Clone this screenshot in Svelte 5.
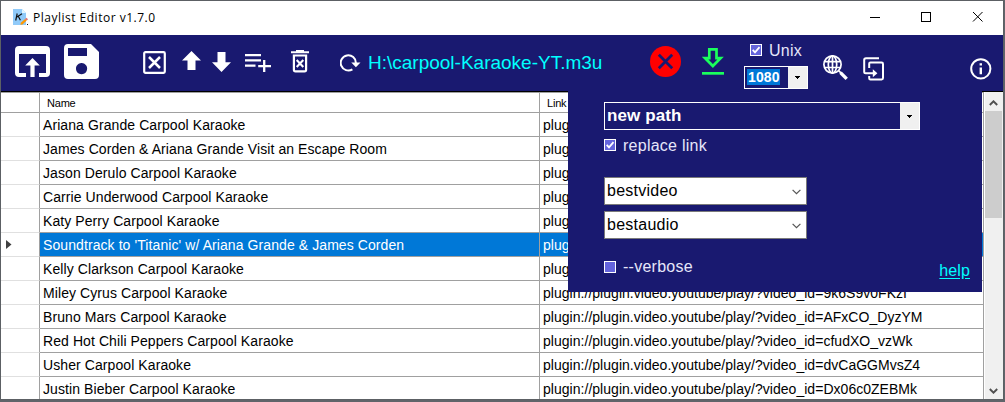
<script>
  const rows = [
    ['Ariana Grande Carpool Karaoke', 'plugin://'],
    ['James Corden & Ariana Grande Visit an Escape Room', 'plugin://'],
    ['Jason Derulo Carpool Karaoke', 'plugin://'],
    ['Carrie Underwood Carpool Karaoke', 'plugin://'],
    ['Katy Perry Carpool Karaoke', 'plugin://'],
    ["Soundtrack to 'Titanic' w/ Ariana Grande & James Corden", 'plugin://'],
    ['Kelly Clarkson Carpool Karaoke', 'plugin://'],
    ['Miley Cyrus Carpool Karaoke', 'plugin://plugin.video.youtube/play/?video_id=9k6S9v0FKzI'],
    ['Bruno Mars Carpool Karaoke', 'plugin://plugin.video.youtube/play/?video_id=AFxCO_DyzYM'],
    ['Red Hot Chili Peppers Carpool Karaoke', 'plugin://plugin.video.youtube/play/?video_id=cfudXO_vzWk'],
    ['Usher Carpool Karaoke', 'plugin://plugin.video.youtube/play/?video_id=dvCaGGMvsZ4'],
    ['Justin Bieber Carpool Karaoke', 'plugin://plugin.video.youtube/play/?video_id=Dx06c0ZEBMk']
  ];
  const selected = 5;
</script>

{#snippet check(on)}
  <svg class="check" width="12" height="12" viewBox="0 0 12 12">
    <rect x=".5" y=".5" width="11" height="11" fill="#6464dc" stroke="#fff" />
    {#if on}<path d="M2.7 5.8 5 8.3 9.5 3.2" fill="none" stroke="#fff" stroke-width="1.8" />{/if}
  </svg>
{/snippet}

{#snippet triangle()}
  <span class="drop"><svg width="5" height="3" viewBox="0 0 5 3" shape-rendering="crispEdges"><path d="M0 0h5v1H4v1H3v1H2V2H1V1H0z" fill="#000" /></svg></span>
{/snippet}

{#snippet chevron()}
  <svg width="9" height="6" viewBox="0 0 9 6"><path d="M.6 .8 4.5 4.7 8.4 .8" fill="none" stroke="#555" stroke-width="1.2" /></svg>
{/snippet}

<div class="window">
  <header class="titlebar">
    <svg class="app" width="16" height="17" viewBox="0 0 16 17">
      <path d="M0 0h9l4 4v12H0z" fill="#90caf9" /><path d="M9 0v4h4z" fill="#e1f5fe" />
      <path d="M4.2 4.5 2.7 11.5M9 4.8 3.5 8.2M5.4 7.5 7.4 11.3" stroke="#111" stroke-width="1.2" fill="none" />
      <path d="m7.3 15.8.5-2 4.3-3.7 1.6 1.5-4.2 4z" fill="#ff9800" /><path d="m12 10.1 1.4-1.3 1.7 1.5-1.4 1.3z" fill="#e57373" />
      <path d="M14 15h1v1h-1z" fill="#111" />
    </svg>
    <span class="title">Playlist Editor v1.7.0</span>
    <svg class="controls" width="115" height="12" viewBox="0 0 115 12" fill="none" stroke="#000">
      <path d="M0 6.5h10M51.5 1.5h9v9h-9z" shape-rendering="crispEdges" />
      <path d="m103 1 9.5 9.5m0-9.5L103 10.5" />
    </svg>
  </header>

  <div class="toolbar">
    <svg class="open" width="35" height="32" viewBox="0 0 35 32" fill="#fff">
      <path d="M4 0h27q4 0 4 4v23q0 4-4 4h-7v-4h7V8H4v19h7v4H4q-4 0-4-4V4q0-4 4-4z" />
      <path d="m17.5 12 7.3 7.5h-5.2V31h-4.2V19.5h-5.2z" />
    </svg>
    <svg class="save" width="35" height="35" viewBox="0 0 35 35">
      <path d="M4 0h23l8 8v23q0 4-4 4H4q-4 0-4-4V4q0-4 4-4zM4 4v8h19V4zM17.5 19a5.6 5.6 0 1 0 .1 0z" fill="#fff" fill-rule="evenodd" />
    </svg>
    <svg class="xbox" width="23" height="23" viewBox="0 0 23 23" fill="none" stroke="#fff">
      <rect x="1.2" y="1.2" width="20.6" height="20.6" rx="1.2" stroke-width="2.2" /><path d="m6 6 11 11m0-11L6 17" stroke-width="2.5" />
    </svg>
    <svg class="up" width="19" height="20" viewBox="0 0 19 20"><path d="M9.5 0 19 9.5h-5.5V19h-8V9.5H0z" fill="#fff" /></svg>
    <svg class="down" width="19" height="20" viewBox="0 0 19 20"><path d="M9.5 20 0 10.3h5.5V0h8v10.3H19z" fill="#fff" /></svg>
    <svg class="add" width="26" height="18" viewBox="0 0 26 18"><path d="M0 1.2h16M0 6.4h16M0 11.6h10.5M19.2 6v12M13.2 12.2H26" fill="none" stroke="#fff" stroke-width="2.3" /></svg>
    <svg class="trash" width="18" height="23" viewBox="0 0 18 23" fill="none" stroke="#fff">
      <path d="M0 2.3h18M5 1h8" stroke-width="2" /><path d="M2.9 5.5v14.3q0 1.6 1.6 1.6h9q1.6 0 1.6-1.6V5.5z" stroke-width="2.2" /><path d="m5.7 10 6.6 7m0-7-6.6 7" stroke-width="2.1" />
    </svg>
    <svg class="reload" width="21" height="18" viewBox="0 0 21 18"><path d="M12.4 15.3A7.6 7.6 0 1 1 15.9 9" fill="none" stroke="#fff" stroke-width="2" /><path d="M11.3 8.4H20.5L15.9 13.3z" fill="#fff" /></svg>
    <span class="file">H:\carpool-Karaoke-YT.m3u</span>
    <svg class="stop" width="31" height="31" viewBox="0 0 31 31"><circle cx="15.5" cy="15.5" r="15.5" fill="#f00" /><path d="m8.8 8.8 13.4 13.4m0-13.4L8.8 22.2" stroke="#191970" stroke-width="2.8" /></svg>
    <svg class="get" width="22" height="27" viewBox="0 0 22 27"><path d="M7.3 1.4h7.2v8.8h4.1L10.9 18 3.2 10.2h4.1z" fill="none" stroke="#1aff5c" stroke-width="2.7" /><path d="M0 24h22v2.7H0z" fill="#1aff5c" /></svg>
    <div class="quality">
      <label>{@render check(true)}<span>Unix</span></label>
      <div class="combo small"><b><mark>1080</mark></b>{@render triangle()}</div>
    </div>
    <svg class="globe" width="26" height="26" viewBox="0 0 26 26" fill="none" stroke="#fff" stroke-width="1.7">
      <circle cx="9.5" cy="9.5" r="8.6" /><ellipse cx="9.5" cy="9.5" rx="4.2" ry="8.6" /><path d="M1.5 6.6h16M1.5 12.5h16M9.5 1v17" /><path d="m15.8 15.8 2.5 2.4" /><path d="m17.5 17.6 6.2 6.3" stroke-width="3.4" />
    </svg>
    <svg class="dup" width="22" height="24" viewBox="0 0 22 24" fill="none" stroke="#fff" stroke-width="2">
      <path d="M16 1.2H3q-1.8 0-1.8 1.8v11.8q0 1.5 1.5 1.5H12" /><path d="M6.2 11V6.8q0-1.2 1.2-1.2h11.2q1.4 0 1.4 1.4v14q0 1.4-1.4 1.4H7.4q-1.2 0-1.2-1.2V19" /><path d="m9.8 12.2 4.6 4.1-4.6 4z" fill="#fff" stroke="none" />
    </svg>
    <svg class="info" width="22" height="22" viewBox="0 0 22 22"><circle cx="10.8" cy="10.8" r="9.6" fill="none" stroke="#fff" stroke-width="2" /><path d="M9.6 5.2H12v2.4H9.6zM9.6 9.4H12v6.8H9.6z" fill="#fff" /></svg>
  </div>

  <main>
    <div class="grid">
      <div class="row head"><i></i><span>Name</span><span>Link</span></div>
      {#each rows as [name, link], n}
        <div class="row" class:selected={n === selected}>
          <i>{#if n === selected}<svg width="6" height="9" viewBox="0 0 6 9"><path d="M0 0 5.5 4.5 0 9z" fill="#404040" /></svg>{/if}</i>
          <span>{name}</span><span class="link">{link}</span>
        </div>
      {/each}
    </div>
    <div class="scroll">
      <svg width="9" height="6" viewBox="0 0 9 6"><path d="M.8 5 4.5 1.3 8.2 5" fill="none" stroke="#505050" stroke-width="1.9" /></svg>
      <div class="thumb"></div>
      <svg class="end" width="9" height="6" viewBox="0 0 9 6"><path d="M.8 1 4.5 4.7 8.2 1" fill="none" stroke="#505050" stroke-width="1.9" /></svg>
    </div>
  </main>

  <aside class="panel">
    <div class="combo path"><b>new path</b>{@render triangle()}</div>
    <label class="replace">{@render check(true)}<span>replace link</span></label>
    <div class="select">bestvideo{@render chevron()}</div>
    <div class="select">bestaudio{@render chevron()}</div>
    <div class="foot">
      <label>{@render check(false)}<span class="verbose">--verbose</span></label>
      <a href="#help">help</a>
    </div>
  </aside>
</div>

<style>
  :global(body) { margin: 0; background: #60646a; overflow: hidden; }
  * { box-sizing: border-box; }
  svg { display: block; flex: none; }
  .window { position: relative; width: 1004px; height: 400px; border: 1px solid #5c6064; background: #fff; display: flex; flex-direction: column; overflow: hidden; font: 14px/23px "Liberation Sans", Arial, sans-serif; color: #000; white-space: nowrap; }
  .titlebar { height: 34px; flex: none; display: flex; align-items: flex-start; }
  .app { margin: 8px 0 0 12px; }
  .title { margin: 8px 0 0 4px; font: 12px/18px "Open Sans", "Noto Sans", sans-serif; letter-spacing: .5px; }
  .controls { margin: 10px 18.5px 0 auto; }
  .toolbar { height: 56px; flex: none; background: #191970; display: flex; align-items: flex-start; }
  .open { margin: 11px 0 0 14px; }
  .save { margin: 9px 0 0 14px; }
  .xbox { margin: 16px 0 0 44px; }
  .up { margin: 16px 0 0 16px; }
  .down { margin: 17px 0 0 11px; }
  .add { margin: 19px 0 0 14px; }
  .trash { margin: 15px 0 0 20px; }
  .reload { margin: 19px 0 0 31px; }
  .file { margin: 16px 0 0 7px; width: 282px; font-size: 19px; line-height: 24px; color: #0ff; }
  .stop { margin-top: 11px; }
  .get { margin: 13px 0 0 21px; }
  .quality { margin: 6px 0 0 20px; width: 64px; }
  .quality label { padding-left: 6px; height: 18px; margin-bottom: 7px; }
  label { display: flex; align-items: center; gap: 7px; color: #e6e6fa; font-size: 16px; line-height: 18px; }
  label span { letter-spacing: .25px; padding-top: 1px; }
  .combo { display: flex; border: 1px solid #fff; color: #fff; background: #191970; }
  .combo b { flex: 1; }
  .small { height: 23px; font-size: 14px; line-height: 16px; padding-left: 2px; }
  .small b { padding-top: 2px; }
  mark { display: block; width: 33px; height: 16px; background: #0078d7; color: #fff; padding-left: 1px; letter-spacing: .1px; }
  .drop { width: 19px; background: #f0f0f0; display: flex; align-items: center; justify-content: center; }
  .globe { margin: 20px 0 0 15px; }
  .dup { margin: 22px 0 0 14px; }
  .info { margin: 23px 0 0 85px; }
  main { flex: 1; min-height: 0; display: flex; border-top: 1px solid #000; }
  .grid { width: 983px; overflow: hidden; border-right: 1px solid #a0a0a0; }
  .row { height: 24px; display: grid; grid-template-columns: 39px 500px 1fr; line-height: 25px; letter-spacing: .085px; }
  .row > * { height: 24px; border-bottom: 1px solid #a0a0a0; border-right: 1px solid #a0a0a0; padding-left: 3px; }
  .row > :last-child { border-right: 0; }
  .row .link { letter-spacing: .03px; }
  .row i { border-bottom-color: #e0e0e0; padding: 7px 0 0 5px; }
  .row.head { height: 21px; border-top: 1px solid #a0a0a0; font-size: 11px; line-height: 20px; letter-spacing: -.2px; }
  .row.head > * { height: 20px; }
  .row.head span { padding-left: 7px; }
  .row.head i { border-bottom-color: #a0a0a0; }
  .selected span { background: #0078d7; color: #fff; }
  .scroll { flex: 1; margin-left: 1px; padding: 8px 1px 0 0; background: #f0f0f0; display: flex; flex-direction: column; align-items: center; }
  .thumb { width: 17px; height: 107px; margin-top: 5px; background: #cdcdcd; }
  .end { margin: auto 0 5px; }
  .panel { position: absolute; left: 567px; top: 90px; width: 414px; height: 201px; background: #191970; padding: 11px 12px 0 36px; }
  .path { width: 316px; height: 28px; padding-left: 2px; font-size: 17px; line-height: 26px; letter-spacing: .1px; }
  .replace { margin-top: 6px; height: 18px; }
  .select { width: 203px; height: 28px; margin-top: 6px; border: 1px solid #7a7a7a; background: #fff; display: flex; align-items: center; justify-content: space-between; padding: 0 5px 2px 2px; font-size: 16px; letter-spacing: .25px; }
  .select svg { margin-top: 3px; }
  .replace + .select { margin-top: 23px; }
  .foot { display: flex; align-items: flex-start; justify-content: space-between; padding-top: 18px; }
  a { margin-top: 5px; color: #0ff; font-size: 16px; line-height: 18px; letter-spacing: .1px; text-underline-offset: 2px; }
</style>
